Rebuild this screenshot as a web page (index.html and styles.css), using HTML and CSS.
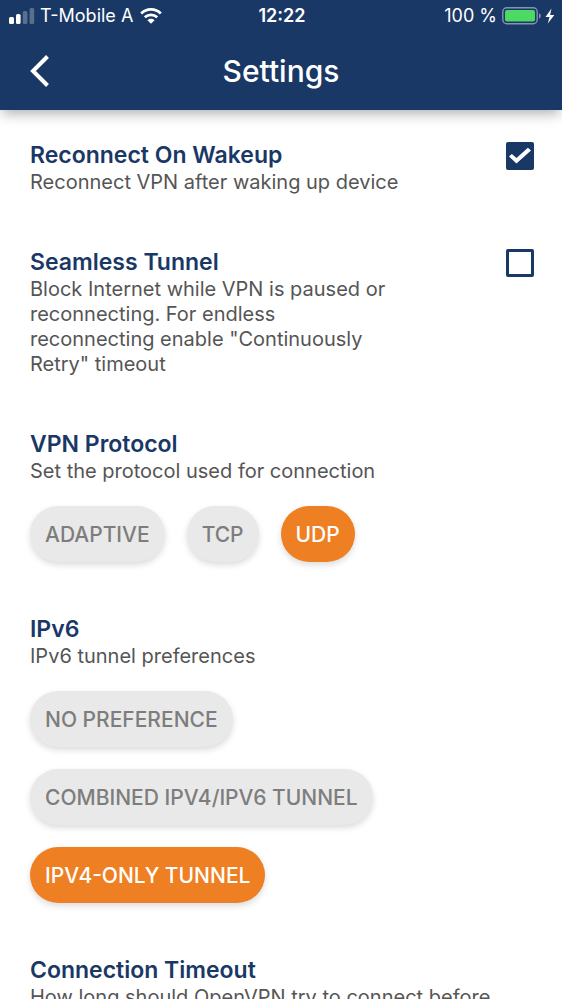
FILE: index.html
```html
<!DOCTYPE html>
<html lang="en">
<head>
<meta charset="utf-8">
<meta name="viewport" content="width=device-width, initial-scale=1">
<title>Settings</title>
<link rel="stylesheet" href="styles.css">
</head>
<body>
<header class="app-header">
  <div class="status-bar">
    <div class="status-left">
      <svg class="signal" width="26" height="16" viewBox="0 0 26 16" fill="#fff" aria-hidden="true">
        <rect x="0" y="9" width="5" height="7" rx="1.5"/>
        <rect x="7" y="6" width="4.600" height="10" rx="1.500"/>
        <rect x="13.800" y="3" width="4.600" height="13" rx="1.500" opacity=".28"/>
        <rect x="20.600" y="0" width="4.600" height="16" rx="1.500" opacity=".28"/>
      </svg>
      <span>T-Mobile A</span>
      <svg class="wifi" width="22" height="16" viewBox="0 0 22 16" fill="none" stroke="#fff" stroke-width="2.8" aria-hidden="true">
        <path d="M1.2 5.4a14 14 0 0 1 19.6 0"/>
        <path d="M4.8 9.3a8.9 8.9 0 0 1 12.4 0"/>
        <path d="M11 15.700l-3.600-3.500a5.200 5.200 0 0 1 7.200 0z" fill="#fff" stroke="none"/>
      </svg>
    </div>
    <time class="clock">12:22</time>
    <div class="status-right">
      <span>100 %</span>
      <svg width="53" height="18" viewBox="0 0 53 18" aria-hidden="true">
        <rect x=".8" y=".8" width="34.4" height="16" rx="4" fill="none" stroke="#8593b0" stroke-width="1.4"/>
        <rect x="3" y="3" width="30" height="11.600" rx="2" fill="#4cd964"/>
        <path d="M37 6.200c2.400.8 2.400 4.600 0 5.400z" fill="#8593b0"/>
        <path d="M49.500 1.500L43.500 10h4l-1.700 6.500L52.300 8h-4.200z" fill="#fff"/>
      </svg>
    </div>
  </div>
  <div class="title-bar">
    <button class="back" type="button" aria-label="Back">
      <svg width="20" height="32" viewBox="0 0 20 32" fill="none" stroke="#fff" stroke-width="4" aria-hidden="true"><path d="M17.500 1.500L3 16l14.500 14.500"/></svg>
    </button>
    <h1>Settings</h1>
  </div>
</header>
<main class="settings">
  <section class="setting setting-toggle">
    <div class="setting-text">
      <h2><label for="reconnect">Reconnect On Wakeup</label></h2>
      <p>Reconnect VPN after waking up device</p>
    </div>
    <input class="check" type="checkbox" id="reconnect" checked>
  </section>
  <section class="setting setting-toggle">
    <div class="setting-text">
      <h2><label for="seamless">Seamless Tunnel</label></h2>
      <p>Block Internet while VPN is paused or reconnecting. For endless reconnecting enable "Continuously Retry" timeout</p>
    </div>
    <input class="check" type="checkbox" id="seamless">
  </section>
  <section class="setting">
    <h2>VPN Protocol</h2>
    <p>Set the protocol used for connection</p>
    <div class="options">
      <button class="option" type="button">ADAPTIVE</button>
      <button class="option" type="button">TCP</button>
      <button class="option selected" type="button">UDP</button>
    </div>
  </section>
  <section class="setting">
    <h2>IPv6</h2>
    <p>IPv6 tunnel preferences</p>
    <div class="options options-stacked">
      <button class="option" type="button">NO PREFERENCE</button>
      <button class="option" type="button">COMBINED IPV4/IPV6 TUNNEL</button>
      <button class="option selected" type="button">IPV4-ONLY TUNNEL</button>
    </div>
  </section>
  <section class="setting">
    <h2>Connection Timeout</h2>
    <p>How long should OpenVPN try to connect before</p>
  </section>
</main>
</body>
</html>
```
FILE: styles.css
```css
* {
  box-sizing: border-box;
}

body {
  display: flex;
  flex-direction: column;
  height: 100vh;
  margin: 0;
  overflow: hidden;
  background: #fff;
  color: #555;
  font-family: Inter, "Liberation Sans", sans-serif;
  font-size: 20px;
  line-height: 25px;
}

h1,
h2,
p {
  margin: 0;
}

button {
  border: 0;
  cursor: pointer;
  font-family: inherit;
}

.app-header {
  position: relative;
  flex: none;
  background: #1a3866;
  color: #fff;
  box-shadow: 0 6px 12px -2px rgba(0, 0, 0, 0.3);
}

.status-bar {
  display: grid;
  grid-template-columns: 1fr auto 1fr;
  align-items: center;
  height: 31px;
  padding: 0 7px 0 9px;
  font-size: 18px;
}

.status-left,
.status-right {
  display: flex;
  align-items: center;
}

.status-left {
  gap: 5px;
}

.wifi {
  margin-left: 2px;
}

.status-right {
  justify-content: flex-end;
  gap: 5px;
}

.clock {
  font-weight: 600;
}

.title-bar {
  display: grid;
  grid-template-columns: 1fr auto 1fr;
  align-items: center;
  height: 79px;
  padding: 0 30px;
}

.back {
  display: flex;
  justify-self: start;
  padding: 0;
  background: none;
}

.title-bar h1 {
  font-size: 30px;
  font-weight: 500;
  line-height: 36px;
}

.settings {
  display: flex;
  flex: 1;
  flex-direction: column;
  gap: 53px;
  min-height: 0;
  padding: 31px 28px 0 30px;
  overflow: hidden;
}

.setting {
  flex: none;
}

.setting h2 {
  color: #1a3866;
  font-size: 23px;
  font-weight: 600;
  line-height: 29px;
}

.setting-toggle {
  display: flex;
  align-items: flex-start;
  justify-content: space-between;
  gap: 104px;
}

.check {
  display: grid;
  flex: none;
  place-items: center;
  width: 28px;
  height: 28px;
  margin: 1px 0 0;
  appearance: none;
  border: 3px solid #1a3866;
  border-radius: 2px;
}

.check:checked {
  background: #1a3866;
}

.check:checked::before {
  width: 22px;
  height: 18px;
  background: #fff;
  clip-path: polygon(0 53%, 13% 39%, 34% 61%, 86% 4%, 100% 19%, 34% 92%);
  content: "";
}

.options {
  display: flex;
  flex-wrap: wrap;
  gap: 22px;
  margin-top: 22px;
}

.options-stacked {
  flex-direction: column;
  align-items: flex-start;
}

.option {
  height: 56px;
  padding: 0 15px;
  border-radius: 28px;
  background: #e9e9e9;
  box-shadow: 0 3px 6px rgba(0, 0, 0, 0.14);
  color: #7d7d7d;
  font-size: 21px;
  font-weight: 500;
}

.option.selected {
  background: #ee7f22;
  color: #fff;
}
```
